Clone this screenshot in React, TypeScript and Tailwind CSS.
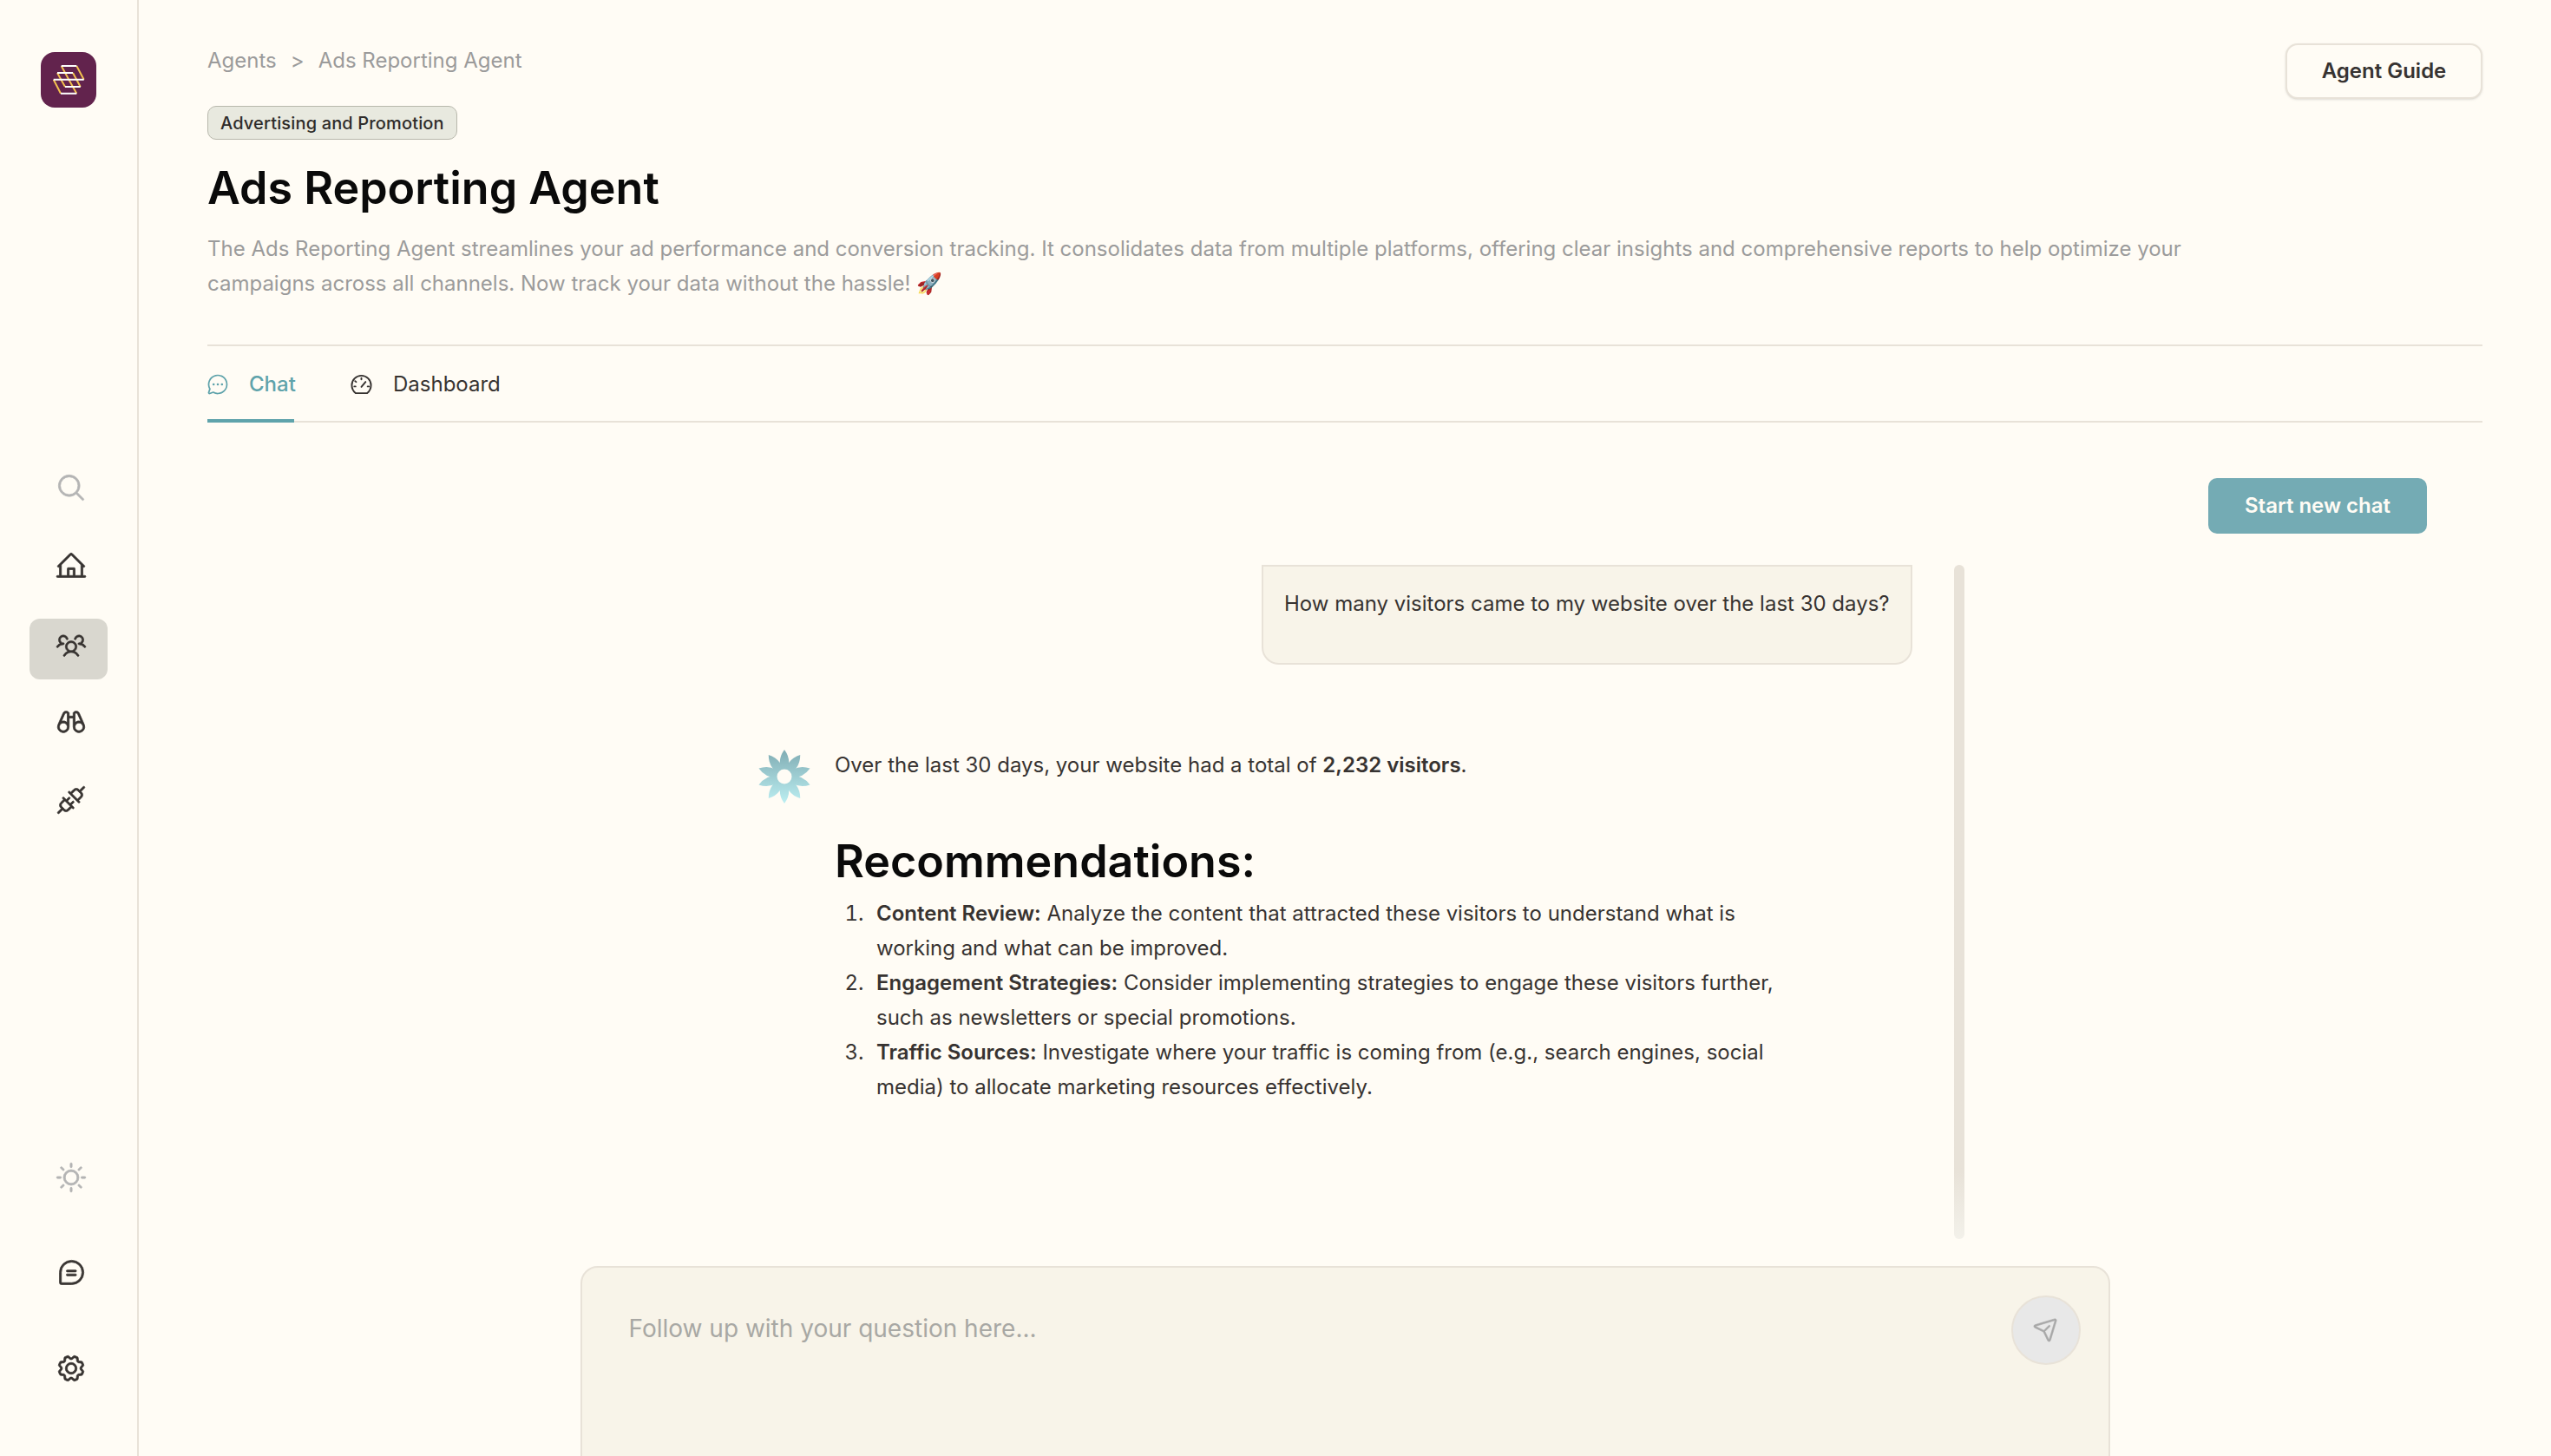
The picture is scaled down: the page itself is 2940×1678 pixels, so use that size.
import {
  PiMagnifyingGlass,
  PiHouseLine,
  PiUsersThree,
  PiBinoculars,
  PiPlugs,
  PiSun,
  PiChatTeardropText,
  PiGear,
  PiChatCircleDots,
  PiPaperPlaneTilt,
} from "react-icons/pi";

function Logo() {
  return (
    <div className="w-16 h-16 rounded-[16px] bg-[#62234d]">
      <svg width="64" height="64" viewBox="0 0 64 64" fill="none" strokeWidth="2">
        <path d="M23.7 16l8.6 15.7M41.3 16l8.4 15.7M19 24l9 16M37 24l8.7 16M14.7 31.7L23 47.7M32.3 31.7l9 16" stroke="#f2c14e" />
        <path d="M23.7 16h17.6M32.3 31.7h17.4M19 24h18M28 40h17.7M14.7 31.7h17.6M23 47.7h18.3" stroke="#fff" />
      </svg>
    </div>
  );
}

function Flower() {
  const petals = [0, 36, 72, 108, 144, 180, 216, 252, 288, 324];
  return (
    <svg width="62" height="64" viewBox="0 0 62 64" className="shrink-0 mt-[2px]">
      <defs>
        <linearGradient id="petal" gradientUnits="userSpaceOnUse" x1="31" y1="0" x2="31" y2="64">
          <stop offset="0" stopColor="#7fabb2" />
          <stop offset="1" stopColor="#bdf0f3" />
        </linearGradient>
      </defs>
      <g fill="url(#petal)">
        {petals.map((a) => {
          const r = (a * Math.PI) / 180;
          const dx = Math.sin(r);
          const dy = -Math.cos(r);
          const px = Math.cos(r);
          const py = Math.sin(r);
          const cx = 31;
          const cy = 32;
          const tipX = cx + dx * 31;
          const tipY = cy + dy * 31;
          const midX = cx + dx * 17;
          const midY = cy + dy * 17;
          return (
            <path
              key={a}
              d={`M${cx} ${cy}Q${midX + px * 10.5} ${midY + py * 10.5} ${tipX} ${tipY}Q${midX - px * 10.5} ${midY - py * 10.5} ${cx} ${cy}Z`}
            />
          );
        })}
      </g>
      <circle cx="31" cy="32" r="8.5" fill="#fffcf5" />
    </svg>
  );
}

function GaugeIcon() {
  return (
    <svg width="25" height="24" viewBox="0 0 26 24" fill="none" stroke="currentColor" strokeWidth="2" strokeLinecap="round">
      <path d="M6 22.500h14c2.500-2.200 4.500-5 4.500-9.500A11.500 11.500 0 0 0 1.500 13c0 4.500 2 7.300 4.500 9.500z" />
      <path d="M13 15l5-6M13 4.500v1.500M5.500 8l1.200 1M4.500 14.500h1.500M20.500 14.500H22" />
    </svg>
  );
}

function Sidebar() {
  return (
    <aside className="w-[160px] h-full shrink-0 border-r-2 border-[#e8e2d8] flex flex-col pl-[34px]">
      <div className="mt-[60px] ml-[13px]">
        <Logo />
      </div>
      <div className="mt-[413px] w-[90px] flex flex-col">
        <div className="h-[50px] flex items-center justify-center mb-[40px]">
          <PiMagnifyingGlass strokeWidth={5} className="w-9 h-9 ml-[6px] text-[#b4b4b4]" />
        </div>
        <div className="h-[50px] flex items-center justify-center mb-[36px]">
          <PiHouseLine strokeWidth={5} className="w-9 h-9 ml-[6px] text-[#373331]" />
        </div>
        <div className="h-[70px] rounded-[12px] bg-[#d9d7cf] flex items-center justify-center mb-[24px]">
          <PiUsersThree strokeWidth={4} className="w-9 h-9 ml-[6px] -mt-[10px] text-[#373331]" />
        </div>
        <div className="h-[50px] flex items-center justify-center mb-[40px]">
          <PiBinoculars strokeWidth={5} className="w-9 h-9 ml-[6px] text-[#373331]" />
        </div>
        <div className="h-[50px] flex items-center justify-center">
          <PiPlugs strokeWidth={5} className="w-9 h-9 ml-[6px] text-[#373331]" />
        </div>
      </div>
      <div className="mt-auto mb-[76px] w-[90px] flex flex-col gap-[60px]">
        <div className="h-[50px] flex items-center justify-center">
          <PiSun strokeWidth={5} className="w-9 h-9 ml-[6px] text-[#b4b4b4]" />
        </div>
        <div className="h-[50px] flex items-center justify-center">
          <PiChatTeardropText strokeWidth={5} className="w-9 h-9 ml-[6px] text-[#373331]" />
        </div>
        <div className="h-[50px] flex items-center justify-center">
          <PiGear strokeWidth={5} className="w-9 h-9 ml-[6px] text-[#373331]" />
        </div>
      </div>
    </aside>
  );
}

function Header() {
  return (
    <header className="flex justify-between items-start">
      <div className="max-w-[2300px]">
        <div className="flex items-center text-[24px] leading-[36px] text-[#9b9b9b] mt-[52px]">
          <span>Agents</span>
          <span className="mx-[16px]">&gt;</span>
          <span>Ads Reporting Agent</span>
        </div>
        <span className="flex w-fit items-center h-[39px] mt-[34px] px-[14px] rounded-[10px] border border-[#b8b8ac] bg-[#e8e9df] text-[20px] tracking-[0.15px] font-medium text-[#2f2c2a]">
          Advertising and Promotion
        </span>
        <h1 className="mt-[21px] text-[52px] leading-[70px] font-semibold text-[#0a0a0a]">Ads Reporting Agent</h1>
        <p className="mt-[15px] text-[24px] leading-[40px] text-[#9b9b9b]">
          The Ads Reporting Agent streamlines your ad performance and conversion tracking. It consolidates data from
          multiple platforms, offering clear insights and comprehensive reports to help optimize your campaigns across
          all channels. Now track your data without the hassle! 🚀
        </p>
      </div>
      <button className="mt-[50px] w-[227px] h-[64px] rounded-[14px] border-2 border-[#e8e2d8] bg-[#fffcf5] text-[24px] font-semibold text-[#373331] shadow-sm">
        Agent Guide
      </button>
    </header>
  );
}

function Tabs() {
  return (
    <div className="mt-[50px] border-t-2 border-[#e8e2d8]">
      <div className="flex gap-[65px] h-[88px] border-b-2 border-[#e8e2d8]">
        <div className="flex items-center gap-[22px] w-[100px] h-[88px] pt-[3px] border-b-4 border-[#5fa3ab] text-[#5fa3ab] text-[24px] font-medium">
          <PiChatCircleDots className="w-[28px] h-[28px] -ml-[2px] shrink-0" />
          <span>Chat</span>
        </div>
        <div className="flex items-center gap-[24px] h-[88px] pt-[3px] border-b-4 border-transparent text-[#373331] text-[24px]">
          <GaugeIcon />
          <span>Dashboard</span>
        </div>
      </div>
    </div>
  );
}

function Conversation() {
  return (
    <div className="flex mt-[36px] h-[777px] ml-[634px]">
      <div className="w-[1331px] flex flex-col shrink-0">
        <div className="self-end w-[750px] h-[115px] px-[24px] pt-[25px] rounded-b-[20px] border-2 border-[#e8e2d8] bg-[#f8f4e9] text-[24px] leading-[36px] text-[#373331]">
          How many visitors came to my website over the last 30 days?
        </div>
        <div className="flex gap-[27px] mt-[95px]">
          <Flower />
          <div className="w-[1100px] pt-[1px] text-[24px] leading-[40px] text-[#373331]">
            <p>
              Over the last 30 days, your website had a total of <strong className="font-semibold">2,232 visitors</strong>.
            </p>
            <h2 className="mt-[55px] text-[52px] leading-[72px] font-semibold text-[#0a0a0a]">Recommendations:</h2>
            <ol className="mt-[4px] list-decimal pl-[40px]">
              <li className="pl-[8px]">
                <strong className="font-semibold">Content Review:</strong> Analyze the content that attracted these
                visitors to understand what is working and what can be improved.
              </li>
              <li className="pl-[8px]">
                <strong className="font-semibold">Engagement Strategies:</strong> Consider implementing strategies to
                engage these visitors further, such as newsletters or special promotions.
              </li>
              <li className="pl-[8px]">
                <strong className="font-semibold">Traffic Sources:</strong> Investigate where your traffic is coming
                from (e.g., search engines, social media) to allocate marketing resources effectively.
              </li>
            </ol>
          </div>
        </div>
      </div>
      <div className="w-[12px] h-full ml-[48px] rounded-full bg-gradient-to-b from-[#e8e2d8] from-90% to-[#f3f1ea] shrink-0" />
    </div>
  );
}

function Composer() {
  return (
    <div className="relative w-[1763px] mx-auto mt-[31px] h-[260px] rounded-t-[20px] border-2 border-[#e8e2d8] bg-[#f8f4e9] px-[54px] pt-[50px] text-[28px] leading-[40px] text-[#a8a8a4]">
      Follow up with your question here...
      <div className="absolute right-[32px] top-[32px] w-[80px] h-[80px] rounded-full border-2 border-[#e8e2d8] bg-[#e8e8e8] flex items-center justify-center">
        <PiPaperPlaneTilt strokeWidth={5} className="w-[30px] h-[30px] -mt-[3px] text-[#a8a8a8]" />
      </div>
    </div>
  );
}

export default function App() {
  return (
    <div className="flex h-[1678px] w-[2940px] overflow-hidden bg-[#fffcf5] font-['Inter',sans-serif]">
      <Sidebar />
      <main className="flex-1 min-w-0 pl-[79px] pr-[79px]">
        <Header />
        <Tabs />
        <div className="flex justify-end mt-[64px] pr-[64px]">
          <button className="w-[252px] h-[64px] rounded-[10px] bg-[#74abb4] text-[24px] font-semibold text-[#fffcf5]">
            Start new chat
          </button>
        </div>
        <Conversation />
        <Composer />
      </main>
    </div>
  );
}
